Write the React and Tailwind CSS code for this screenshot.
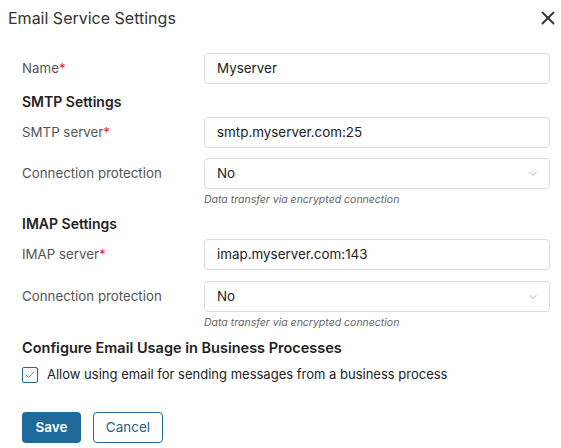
import React, { useState } from 'react'
import { X, ChevronDown, Check } from 'lucide-react'

function Label({ children, required }) {
  return (
    <div className="w-[182px] shrink-0 text-[13.3px] text-[#555]">
      {children}
      {required && <span className="text-[#e0303a]">*</span>}
    </div>
  )
}

function TextField({ label, required, value }) {
  return (
    <div className="flex items-center">
      <Label required={required}>{label}</Label>
      <div className="w-[346px] h-[31px] border border-[#dcdcdc] rounded-[4px] flex items-center px-[12px] text-[13.4px] text-[#222]">
        {value}
      </div>
    </div>
  )
}

function SelectField({ label, value, hint }) {
  return (
    <div>
      <div className="flex items-center">
        <Label>{label}</Label>
        <div className="w-[346px] h-[31px] border border-[#dcdcdc] rounded-[4px] flex items-center justify-between pl-[12px] pr-[10px] text-[13.4px] text-[#222]">
          <span>{value}</span>
          <ChevronDown size={12} strokeWidth={1.5} className="text-[#9a9a9a]" />
        </div>
      </div>
      <div className="ml-[182px] mt-[4px] text-[10.5px] leading-[14px] italic text-[#666]">{hint}</div>
    </div>
  )
}

function Heading({ children, className = '' }) {
  return (
    <div className={`h-[20px] flex items-center font-semibold text-[#222] ${className}`}>
      {children}
    </div>
  )
}

export default function App() {
  const [allowBp, setAllowBp] = useState(true)

  return (
    <div className="w-[561px] h-[448px] bg-white overflow-hidden font-['Inter',sans-serif]">
      <div className="h-[36px] flex items-center justify-between pl-[8px] pr-[2px]">
        <div className="text-[16px] text-[#333]">Email Service Settings</div>
        <X size={22} strokeWidth={2} className="text-[#333]" />
      </div>

      <div className="pl-[22px] pr-[11px]">
        <div className="mt-[17px]">
          <TextField label="Name" required value="Myserver" />
        </div>

        <Heading className="mt-[7px] text-[14px]">SMTP Settings</Heading>
        <div className="mt-[6px]">
          <TextField label="SMTP server" required value="smtp.myserver.com:25" />
        </div>
        <div className="mt-[10px]">
          <SelectField label="Connection protection" value="No" hint="Data transfer via encrypted connection" />
        </div>

        <Heading className="mt-[6px] text-[14px]">IMAP Settings</Heading>
        <div className="mt-[6px]">
          <TextField label="IMAP server" required value="imap.myserver.com:143" />
        </div>
        <div className="mt-[11px]">
          <SelectField label="Connection protection" value="No" hint="Data transfer via encrypted connection" />
        </div>

        <Heading className="mt-[8px] text-[14.5px]">Configure Email Usage in Business Processes</Heading>
        <label className="mt-[7px] h-[20px] flex items-center gap-[9px] cursor-pointer select-none">
          <button
            onClick={() => setAllowBp(!allowBp)}
            className="w-[16px] h-[16px] border border-[#1f6a9a] rounded-[2px] flex items-center justify-center"
          >
            {allowBp && <Check size={12} strokeWidth={1.5} className="text-[#1f6a9a]" />}
          </button>
          <span className="text-[13px] text-[#222]">Allow using email for sending messages from a business process</span>
        </label>

        <div className="mt-[27px] flex gap-[12px]">
          <button className="w-[59px] h-[31px] rounded-[4px] bg-[#1f6a9a] text-white text-[13.5px] font-semibold">
            Save
          </button>
          <button className="w-[70px] h-[31px] rounded-[4px] border border-[#1f6a9a] text-[#1f5f8a] text-[13.5px]">
            Cancel
          </button>
        </div>
      </div>
    </div>
  )
}
